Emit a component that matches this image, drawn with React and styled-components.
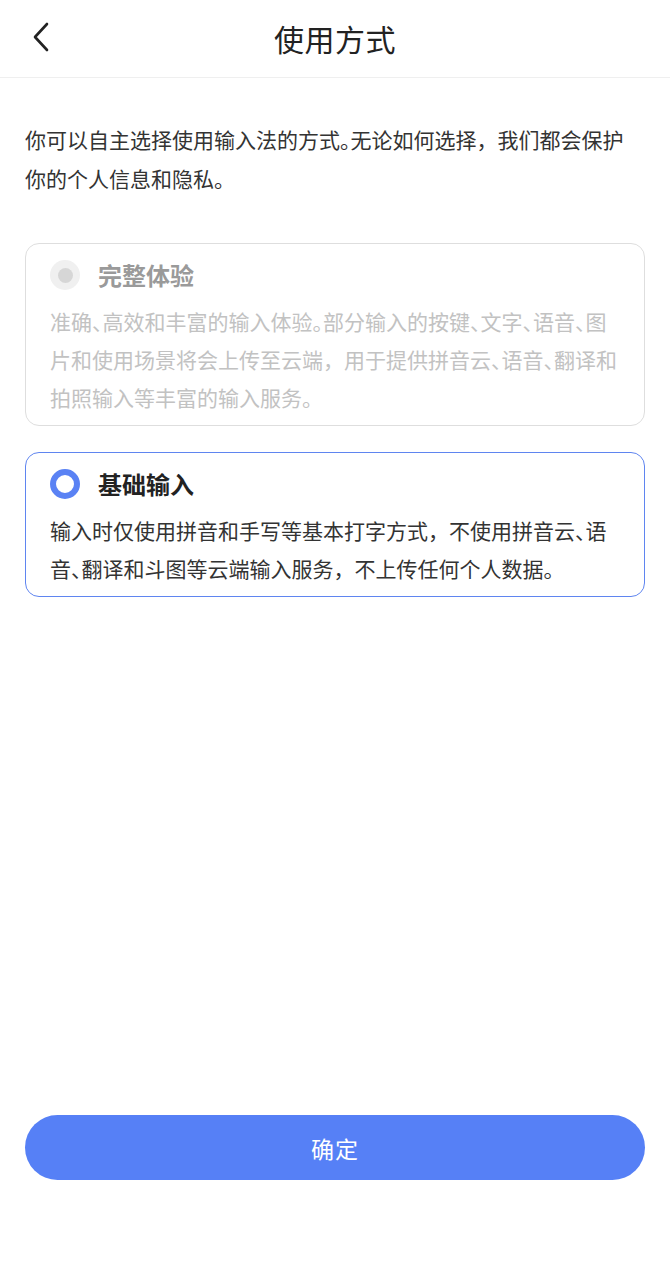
import React from "react";
import styled, { createGlobalStyle } from "styled-components";

const Global = createGlobalStyle`
  html, body { margin: 0; padding: 0; background: #fff; }
  body { font-family: "Noto Sans CJK SC", "Noto Sans", sans-serif; }
  * { box-sizing: border-box; }
`;

const Page = styled.div`
  display: flex;
  flex-direction: column;
  min-height: 100vh;
  background: #fff;
`;

const Header = styled.header`
  position: relative;
  height: 78px;
  display: flex;
  align-items: center;
  justify-content: center;
  border-bottom: 1px solid #efefef;
`;

const BackButton = styled.button`
  position: absolute;
  left: 26px;
  top: 18px;
  width: 32px;
  height: 38px;
  padding: 0;
  border: none;
  background: none;
  display: flex;
  align-items: center;
  justify-content: center;
`;

const Title = styled.h1`
  margin: 0 0 2px;
  font-size: 30px;
  font-weight: 400;
  color: #222;
  letter-spacing: 0.5px;
`;

const Content = styled.main`
  padding: 0 25px;
  display: flex;
  flex-direction: column;
`;

const Intro = styled.p`
  margin: 42px 0 45px;
  font-size: 21px;
  line-height: 39px;
  color: #333;
`;

const P = styled.span`
  font-feature-settings: "halt";
`;

const Card = styled.div`
  border: ${(p) => (p.$active ? "1.5px solid #5f85f0" : "1.5px solid #dedede")};
  border-radius: 14px;
  padding: 14px 20px 9px 24px;
  margin-bottom: 26px;
`;

const CardHead = styled.div`
  display: flex;
  align-items: center;
  gap: 18px;
  height: 34px;
`;

const Radio = styled.span`
  width: 30px;
  height: 30px;
  border-radius: 50%;
  flex: none;
  display: flex;
  align-items: center;
  justify-content: center;
  ${(p) =>
    p.$checked
      ? `border: 6px solid #5a82f4; background: #fff;`
      : `background: #f0f0f0;`}
`;

const Dot = styled.span`
  width: 15px;
  height: 15px;
  border-radius: 50%;
  background: #d6d6d6;
`;

const CardTitle = styled.span`
  font-size: 24px;
  font-weight: 700;
  color: ${(p) => (p.$disabled ? "#9a9a9a" : "#222")};
  line-height: 34px;
`;

const CardText = styled.p`
  margin: 10px 0 0;
  font-size: 21px;
  line-height: 38px;
  color: ${(p) => (p.$disabled ? "#c2c2c2" : "#333")};
`;

const Confirm = styled.button`
  margin: auto 25px 107px;
  height: 65px;
  border: none;
  border-radius: 33px;
  background: #5680f6;
  color: #fff;
  font-family: "Noto Sans CJK SC", sans-serif;
  font-size: 23px;
  font-weight: 400;
  letter-spacing: 1px;
`;

const Spacer = styled.div`
  flex: 1;
`;

function withPunct(str) {
  return str.split(/([、。])/).map((s, i) =>
    s === "、" || s === "。" ? <P key={i}>{s}</P> : <React.Fragment key={i}>{s}</React.Fragment>
  );
}

export default function App() {
  return (
    <Page>
      <Global />
      <Header>
        <BackButton aria-label="返回">
          <svg width="20" height="30" viewBox="0 0 20 30" fill="none">
            <path d="M15 2 L3 15 L15 28" stroke="#222" strokeWidth="2.6" strokeLinecap="round" strokeLinejoin="round" />
          </svg>
        </BackButton>
        <Title>使用方式</Title>
      </Header>
      <Content>
        <Intro>
          {withPunct("你可以自主选择使用输入法的方式。无论如何选择，我们都会保护")}
          <br />
          {withPunct("你的个人信息和隐私。")}
        </Intro>
        <Card>
          <CardHead>
            <Radio>
              <Dot />
            </Radio>
            <CardTitle $disabled>完整体验</CardTitle>
          </CardHead>
          <CardText $disabled>
            {withPunct("准确、高效和丰富的输入体验。部分输入的按键、文字、语音、图")}
            <br />
            {withPunct("片和使用场景将会上传至云端，用于提供拼音云、语音、翻译和")}
            <br />
            {withPunct("拍照输入等丰富的输入服务。")}
          </CardText>
        </Card>
        <Card $active>
          <CardHead>
            <Radio $checked />
            <CardTitle>基础输入</CardTitle>
          </CardHead>
          <CardText>
            {withPunct("输入时仅使用拼音和手写等基本打字方式，不使用拼音云、语")}
            <br />
            {withPunct("音、翻译和斗图等云端输入服务，不上传任何个人数据。")}
          </CardText>
        </Card>
      </Content>
      <Spacer />
      <Confirm>确定</Confirm>
    </Page>
  );
}
